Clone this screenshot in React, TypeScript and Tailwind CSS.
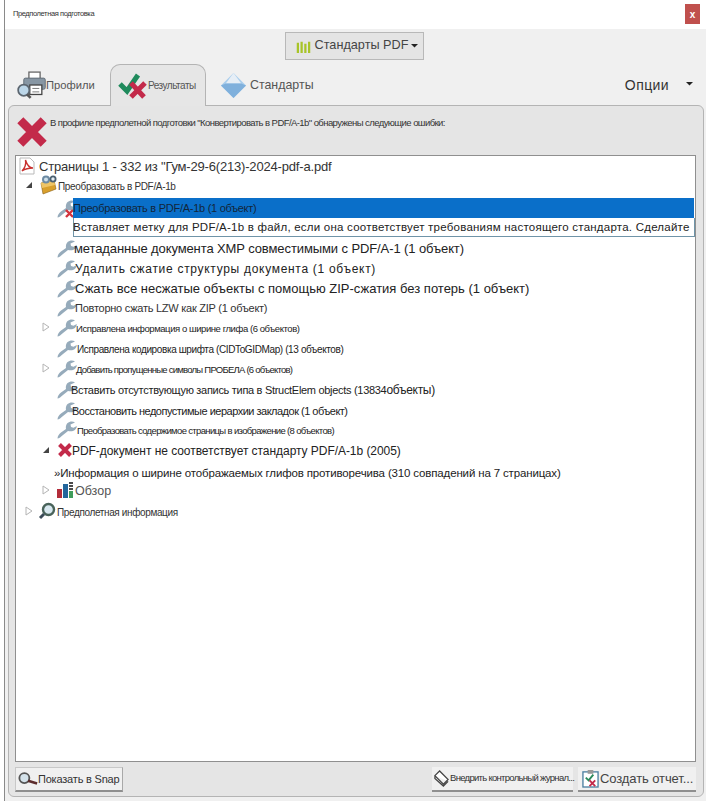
import type { ReactNode } from 'react';

const sans = "font-['Liberation_Sans',Arial,sans-serif]";

function Wrench({ x = false }: { x?: boolean }) {
  return (
    <svg viewBox="0 0 20 20" className="w-5 h-5 shrink-0">
      <path
        d="M0.5 19.5 C0.5 17 2 15 4 13.5 L9 10 C8.5 7 9.5 4 12.5 3 C14.5 2.2 16.5 2.6 18 3.5 L13.5 5.5 L14 8 L16.5 8.8 L19.8 7 C19.8 9 18.5 11 16.5 11.8 C14.5 12.6 12.5 12.4 11 12 L6 16 C4 17.8 2 19.5 0.5 19.5 Z"
        fill="#96abbb"
      />
      {x && <path d="M9 12 L16 19 M16 12 L9 19" stroke="#d2333c" strokeWidth="2.4" />}
    </svg>
  );
}

function RedX({ size = 16 }: { size?: number }) {
  return (
    <svg viewBox="0 0 16 16" width={size} height={size} className="shrink-0">
      <path d="M2.5 2.5 L13.5 13.5 M13.5 2.5 L2.5 13.5" stroke="#c32a4a" strokeWidth="4" />
    </svg>
  );
}

function Closed() {
  return (
    <svg viewBox="0 0 8 10" className="w-2 h-2.5 shrink-0">
      <path d="M1 1 L7 5 L1 9 Z" fill="#fff" stroke="#b4b4b4" />
    </svg>
  );
}

function Open() {
  return (
    <svg viewBox="0 0 8 8" className="w-2 h-2 shrink-0">
      <path d="M7 1 L7 7 L1 7 Z" fill="#444" />
    </svg>
  );
}

function Caret({ w = 7 }: { w?: number }) {
  return (
    <svg viewBox="0 0 8 4" width={w} height={w / 2} className="shrink-0">
      <path d="M0 0 H8 L4 4 Z" fill="#222" />
    </svg>
  );
}

function Row({
  h,
  pl,
  arrow,
  icon,
  gap = 0,
  text,
}: {
  h: number;
  pl: number;
  arrow?: ReactNode;
  icon?: ReactNode;
  gap?: number;
  text: ReactNode;
}) {
  return (
    <div className="flex items-center whitespace-nowrap text-[#222]" style={{ height: h, paddingLeft: pl }}>
      {arrow && <span className="w-[15px] shrink-0 flex">{arrow}</span>}
      {icon}
      <span style={{ marginLeft: gap }}>{text}</span>
    </div>
  );
}

export default function App() {
  return (
    <div className={`${sans} w-[706px] h-[801px] bg-white flex flex-col overflow-hidden pl-1`}>
      <div className="border-l border-[#8a8a8a] h-full flex flex-col">
        {/* Title bar */}
        <div className="h-[29px] shrink-0 flex items-start justify-between pr-[6px] bg-white">
          <span className="mt-[8px] ml-2 text-[7.5px] tracking-[-0.4px] text-[#333]">Предполетная подготовка</span>
          <div className="mt-1 w-[15px] h-5 bg-[#c0504d] text-white text-[10px] font-bold flex items-center justify-center">x</div>
        </div>

        {/* Toolbar */}
        <div className="flex-1 bg-[#f0f0f0] flex flex-col pr-[2px]">
          <div className="flex justify-center h-[31px] mt-[3px] pr-[1px]">
            <div className="w-[139px] h-[28px] bg-[#e4e4e4] border border-[#b8b8b8] flex items-center pl-[10px] text-[12.7px] text-[#444]">
              <svg viewBox="0 0 16 16" className="w-[15px] h-[15px] shrink-0">
                <path d="M2 4v11M6 3v12M10 5v10M14 3v12" stroke="#a8c428" strokeWidth="2.4" />
              </svg>
              <span className="ml-[4px] mr-[3px]">Стандарты PDF</span>
              <Caret />
            </div>
          </div>

          {/* Tabs */}
          <div className="h-[42px] flex items-end relative z-10">
            <div className="w-[105px] h-[40px] pl-[11px] flex items-center shrink-0">
              <svg viewBox="0 0 36 32" className="w-[31px] h-[28px] shrink-0">
                <rect x="15" y="1" width="13" height="8" fill="#fff" stroke="#666" strokeWidth="1.5" />
                <rect x="9" y="8" width="25" height="13" rx="2" fill="#8796a3" stroke="#5c6670" />
                <rect x="16" y="16" width="14" height="11" fill="#fff" stroke="#444" strokeWidth="1.5" />
                <path d="M19 20h8M19 24h8" stroke="#666" />
                <circle cx="9" cy="22" r="6.5" fill="#bcd6e8" stroke="#5c6670" strokeWidth="2" />
                <path d="M13 27 L17 31" stroke="#555" strokeWidth="3" />
              </svg>
              <span className="text-[11.2px] text-[#555] -ml-[1px]">Профили</span>
            </div>
            <div className="w-[96px] h-[42px] -mb-[1px] bg-[#e6e6e6] border border-b-0 border-[#b4b4b4] rounded-t-[10px] pl-[7px] flex items-center shrink-0">
              <svg viewBox="0 0 30 28" className="w-[30px] h-[28px] shrink-0">
                <path d="M2 12 L9 19 L20 3" fill="none" stroke="#1f8a5c" strokeWidth="5" />
                <path d="M13 11 L26 25 M27 11 L13 25" stroke="#c32a4a" strokeWidth="5" />
              </svg>
              <span className="text-[10px] tracking-[-0.5px] text-[#555]">Результаты</span>
            </div>
            <div className="h-[40px] pl-[14px] flex items-center shrink-0">
              <svg viewBox="0 0 28 28" className="w-[27px] h-[27px] shrink-0">
                <path d="M14 1 L27 14 L14 27 L1 14 Z" fill="#a9cdec" />
                <path d="M14 1 L6 12 L22 12 Z" fill="#e6eef6" />
                <path d="M1 14 L6 12 L22 12 L27 14 L14 27 Z" fill="#7fb0dc" />
              </svg>
              <span className="ml-[3px] text-[12.4px] text-[#555]">Стандарты</span>
            </div>
            <div className="ml-auto h-[40px] flex items-center pr-[11px]">
              <span className="text-[14px] tracking-[0.4px] text-[#333]">Опции</span>
              <span className="ml-[17px] mb-[2px]">
                <Caret />
              </span>
            </div>
          </div>

          {/* Panel */}
          <div className="flex-1 mb-[4px] ml-[3px] bg-[#e5e5e5] border border-[#b4b4b4] rounded-[6px] flex flex-col px-[6px]">
            <div className="h-[49px] shrink-0 flex items-start">
              <div className="mt-[9px]">
                <RedX size={34} />
              </div>
              <span className="mt-[10px] ml-[1px] text-[9.5px] tracking-[-0.57px] text-[#333]">
                В профиле предполетной подготовки "Конвертировать в PDF/A-1b" обнаружены следующие ошибки:
              </span>
            </div>

            {/* Tree */}
            <div className="w-[681px] h-[607px] shrink-0 bg-white border border-[#8f8f8f] pt-[1px] overflow-hidden">
              <Row
                h={18}
                pl={3}
                icon={
                  <svg viewBox="0 0 16 18" className="w-[16px] h-[18px] shrink-0">
                    <path d="M1 1h10l4 4v12H1z" fill="#fff" stroke="#b9b9b9" />
                    <path d="M3 14 C6 11 7 6 6.5 3 C8 8 10 11 14 11 C10 11 6 12 3 14Z" fill="none" stroke="#c8312f" strokeWidth="1.4" />
                  </svg>
                }
                gap={4}
                text={<span className="text-[13px] tracking-[-0.18px] text-[#333]">Страницы 1 - 332 из "Гум-29-6(213)-2024-pdf-a.pdf</span>}
              />
              <Row
                h={20}
                pl={9}
                arrow={<Open />}
                icon={
                  <svg viewBox="0 0 20 20" className="w-5 h-5 -ml-[2px] shrink-0">
                    <path d="M3 8 L16 5 L18 14 L5 19 Z" fill="#d9a02c" stroke="#8a5e14" strokeWidth="0.6" />
                    <path d="M3 8 L16 5 L17 10 L4 13 Z" fill="#efc566" />
                    <circle cx="8" cy="4.5" r="3" fill="#cfe0ea" stroke="#6d8ba3" strokeWidth="2" />
                    <circle cx="15" cy="4" r="2.6" fill="#e6eef3" stroke="#4a5f70" strokeWidth="1.8" />
                  </svg>
                }
                text={<span className="text-[10px] tracking-[-0.34px] text-[#333]">Преобразовать в PDF/A-1b</span>}
              />
              <div className="flex items-center h-[22px] mt-[2px] pl-[41px]">
                <Wrench x />
                <div className="-ml-[4px] w-[621px] h-[20px] bg-[#0a6fc9] flex items-center shrink-0">
                  <span className="text-[11px] tracking-[-0.27px] text-[#12263a] whitespace-nowrap">Преобразовать в PDF/A-1b (1 объект)</span>
                </div>
              </div>
              <div className="ml-[57px] w-[622px] h-[19px] -mt-[1px] border border-[#6f94a8] border-t-0 bg-white flex items-center pt-[1px]">
                <span className="-ml-[1px] text-[11.5px] tracking-[0.23px] text-[#222] whitespace-nowrap">
                  Вставляет метку для PDF/A-1b в файл, если она соответствует требованиям настоящего стандарта. Сделайте
                </span>
              </div>
              <Row h={21} pl={41} icon={<Wrench />} gap={-3} text={<span className="text-[13px] tracking-[-0.1px]">метаданные документа XMP совместимыми с PDF/A-1 (1 объект)</span>} />
              <Row h={20} pl={41} icon={<Wrench />} gap={-2} text={<span className="text-[12px] tracking-[0.7px] text-[#222]">Удалить сжатие структуры документа (1 объект)</span>} />
              <Row h={20} pl={41} icon={<Wrench />} gap={-2} text={<span className="text-[13px]">Сжать все несжатые объекты с помощью ZIP-сжатия без потерь (1 объект)</span>} />
              <Row h={18} pl={41} icon={<Wrench />} gap={-2} text={<span className="text-[11px] tracking-[-0.25px] text-[#333]">Повторно сжать LZW как ZIP (1 объект)</span>} />
              <Row h={22} pl={26} arrow={<Closed />} icon={<Wrench />} gap={-1} text={<span className="text-[9.5px] tracking-[-0.43px]">Исправлена информация о ширине глифа (6 объектов)</span>} />
              <Row h={20} pl={41} icon={<Wrench />} text={<span className="text-[10px] tracking-[-0.38px]">Исправлена кодировка шрифта (CIDToGIDMap) (13 объектов)</span>} />
              <Row h={20} pl={26} arrow={<Closed />} icon={<Wrench />} gap={-1} text={<span className="text-[9.5px] tracking-[-0.75px]">Добавить пропущенные символы ПРОБЕЛА (6 объектов)</span>} />
              <Row h={21} pl={41} icon={<Wrench />} gap={-6} text={<span className="text-[11px] tracking-[-0.3px]">Вставить отсутствующую запись типа в StructElem objects (13834<span className="text-[12px]">объекты)</span></span>} />
              <Row h={21} pl={41} icon={<Wrench />} gap={-5} text={<span className="text-[11px] tracking-[-0.5px]">Восстановить недопустимые иерархии закладок (1 объект)</span>} />
              <Row h={17} pl={41} icon={<Wrench />} text={<span className="text-[9.5px] tracking-[-0.65px]">Преобразовать содержимое страницы в изображение (8 объектов)</span>} />
              <Row h={25} pl={26} arrow={<Open />} icon={<RedX />} gap={-1} text={<span className="text-[12px] tracking-[-0.05px]">PDF-документ не соответствует стандарту PDF/A-1b (2005)</span>} />
              <Row h={19} pl={38} text={<span className="text-[11.5px] tracking-[-0.15px]">»Информация о ширине отображаемых глифов противоречива (310 совпадений на 7 страницах)</span>} />
              <Row
                h={17}
                pl={26}
                arrow={<Closed />}
                icon={
                  <svg viewBox="0 0 18 18" className="w-[18px] h-[18px] -ml-[1px] shrink-0">
                    <rect x="1" y="8" width="5" height="9" fill="#b32c3a" />
                    <rect x="7" y="3" width="5" height="14" fill="#23669c" />
                    <rect x="13" y="10" width="4" height="7" fill="#3f9c5a" />
                    <path d="M13 2h4M13 5h4M13 8h4" stroke="#111" strokeWidth="1.5" />
                  </svg>
                }
                gap={1}
                text={<span className="text-[12.5px] text-[#555]">Обзор</span>}
              />
              <Row
                h={25}
                pl={9}
                arrow={<Closed />}
                icon={
                  <svg viewBox="0 0 18 18" className="w-[18px] h-[18px] -ml-[2px] shrink-0">
                    <circle cx="10.5" cy="7.5" r="5.5" fill="#d8e8f0" stroke="#49635a" strokeWidth="2.4" />
                    <path d="M6 12 L2 16" stroke="#3a4a58" strokeWidth="3" />
                  </svg>
                }
                gap={1}
                text={<span className="text-[10px] tracking-[-0.37px] text-[#333]">Предполетная информация</span>}
              />
            </div>

            {/* Footer buttons */}
            <div className="flex items-start mt-[5px] w-[681px]">
              <div className="w-[108px] h-[25px] bg-[#f0f0f0] border border-[#c8c8c8] border-b-2 border-b-[#8f8f8f] border-r-[#a8a8a8] flex items-center pl-[2px]">
                <svg viewBox="0 0 22 16" className="w-[20px] h-4 shrink-0">
                  <circle cx="7" cy="7" r="5.5" fill="#d4e2ea" stroke="#555" strokeWidth="2" />
                  <path d="M11 10 L21 13" stroke="#5c2c2c" strokeWidth="3" />
                </svg>
                <span className="text-[11px] tracking-[-0.2px] text-[#333] whitespace-nowrap">Показать в Snap</span>
              </div>
              <div className="ml-auto w-[141px] h-[25px] bg-[#f0f0f0] border-b-2 border-b-[#8f8f8f] flex items-center pl-[1px]">
                <svg viewBox="0 0 18 18" className="w-[17px] h-[17px] shrink-0">
                  <path d="M2 6 L7 1 L16 10 L11 15 Z M2 6 L2 9 L11 17 L16 12" fill="#fff" stroke="#444" strokeWidth="1.3" />
                </svg>
                <span className="text-[9.5px] tracking-[-0.7px] text-[#333] whitespace-nowrap">Внедрить контрольный журнал...</span>
              </div>
              <div className="ml-[5px] w-[118px] h-[25px] bg-[#f0f0f0] border-b-2 border-b-[#8f8f8f] flex items-center pl-[4px]">
                <svg viewBox="0 0 18 20" className="w-[17px] h-[19px] shrink-0">
                  <rect x="1" y="3" width="16" height="16" fill="#fff" stroke="#4a7fa0" strokeWidth="1.4" />
                  <rect x="6" y="1" width="6" height="4" fill="#999" />
                  <path d="M4 9 L7 12 L12 6" fill="none" stroke="#2a8a5a" strokeWidth="2" />
                  <path d="M8 12 L14 18 M14 12 L8 18" stroke="#c32a4a" strokeWidth="2" />
                </svg>
                <span className="ml-[1px] text-[13px] tracking-[-0.1px] text-[#444] whitespace-nowrap">Создать отчет...</span>
              </div>
            </div>
          </div>
        </div>
      </div>
    </div>
  );
}
